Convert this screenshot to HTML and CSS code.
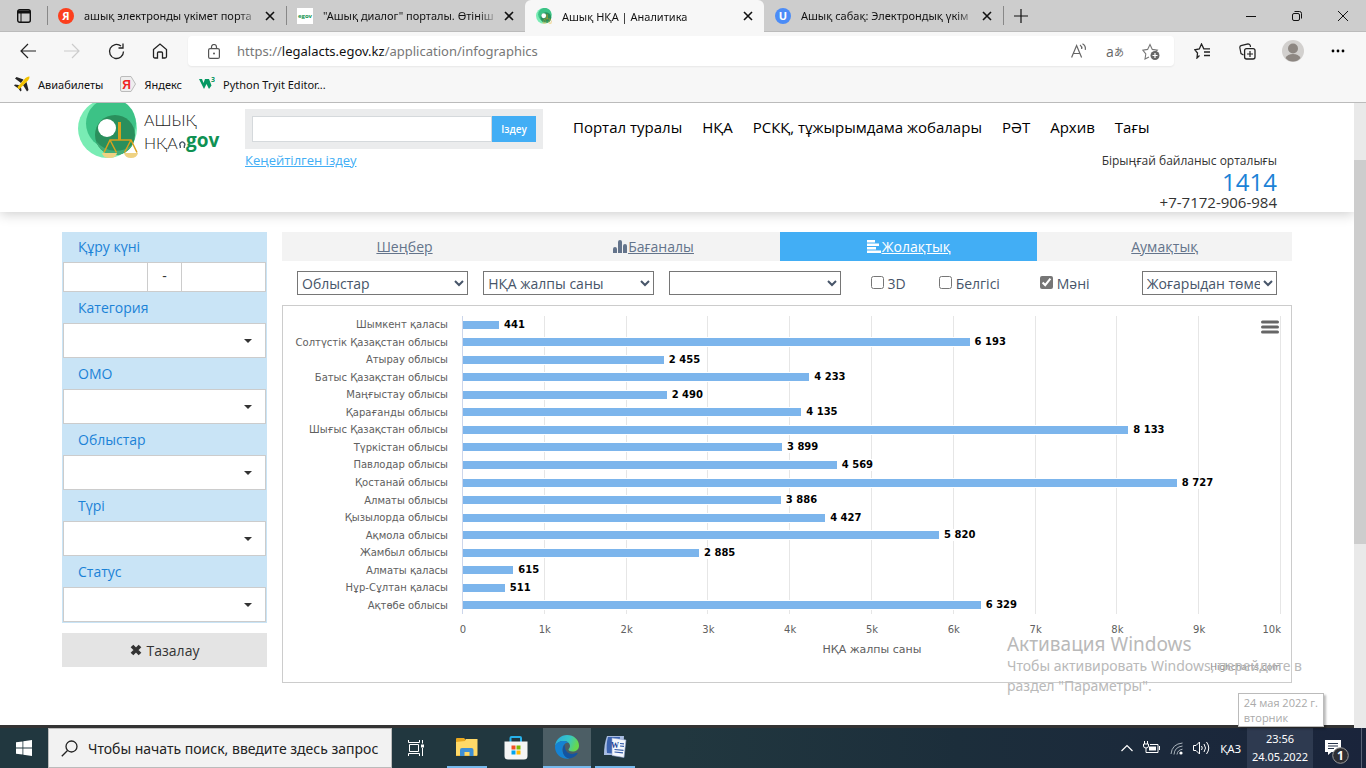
FILE: index.html
```html
<!DOCTYPE html>
<html lang="kk">
<head>
<meta charset="utf-8">
<title>Ашық НҚА | Аналитика</title>
<link rel="stylesheet" href="styles.css">
</head>
<body>
<svg class="defs" aria-hidden="true">
  <symbol id="x" viewBox="0 0 10 10"><path d="M1 1l8 8M9 1l-8 8" fill="none" stroke="currentColor" stroke-width="1.6"/></symbol>
  <symbol id="mark" viewBox="0 0 60 60">
    <circle cx="29.500" cy="29.500" r="29.500" fill="#79ecb4"/>
    <circle cx="33" cy="24.500" r="25" fill="#3cc286"/>
    <circle cx="37" cy="36" r="20" fill="#2a8f5c"/>
    <path d="M18 42a20 20 0 0 0 37 3a25 25 0 0 1-37-3z" fill="#41ac77"/>
    <circle cx="29" cy="29" r="9" fill="#fff"/>
    <path d="M40 23h3v18h-3z" fill="#d9a01d"/>
    <path d="M26 53.500l6-12.500h21l6 12.500M32 41l6.500 12.500M53 41l-6.500 12.500" fill="none" stroke="#d9a01d" stroke-width="1.500"/>
    <path d="M24 54h15q-1 5-7.500 5t-7.500-5zM46 54h14q-1 5-7 5t-7-5z" fill="#efd283"/>
  </symbol>
</svg>

<header class="browser">
  <div class="tabstrip">
    <button class="tab-actions" aria-label="Действия с вкладками"><svg width="14" height="14" viewBox="0 0 14 14"><rect x=".7" y=".7" width="12.600" height="12.600" rx="2" fill="none" stroke="#111" stroke-width="1.400"/><path d="M1 1.500h12v3H1z" fill="#111"/><path d="M4 4v9" stroke="#111"/></svg></button>
    <div class="tab"><svg width="16" height="16" viewBox="0 0 16 16"><circle cx="8" cy="8" r="8" fill="#fc3f1d"/><text x="8" y="12" text-anchor="middle" class="fav-letter">Я</text></svg><span class="tab-title">ашық электронды үкімет порта</span><button class="close" aria-label="Закрыть"><svg width="10" height="10"><use href="#x"/></svg></button></div>
    <div class="tab"><svg width="16" height="16" viewBox="0 0 16 16"><path d="M0 0h16v16H0z" fill="#fff"/><text x="8" y="10" text-anchor="middle" class="fav-egov">egov</text></svg><span class="tab-title">"Ашық диалог" порталы. Өтініш</span><button class="close" aria-label="Закрыть"><svg width="10" height="10"><use href="#x"/></svg></button></div>
    <div class="tab active"><svg width="16" height="16"><use href="#mark"/></svg><span class="tab-title">Ашық НҚА | Аналитика</span><button class="close" aria-label="Закрыть"><svg width="10" height="10"><use href="#x"/></svg></button></div>
    <div class="tab"><svg width="16" height="16" viewBox="0 0 16 16"><circle cx="8" cy="8" r="8" fill="#4b8cf7"/><text x="8" y="12" text-anchor="middle" class="fav-letter">U</text></svg><span class="tab-title">Ашық сабақ: Электрондық үкім</span><button class="close" aria-label="Закрыть"><svg width="10" height="10"><use href="#x"/></svg></button></div>
    <button class="new-tab" aria-label="Новая вкладка"><svg width="14" height="14" viewBox="0 0 14 14"><path d="M7 0v14M0 7h14" stroke="#111" stroke-width="1.200"/></svg></button>
    <div class="window-buttons">
      <button aria-label="Свернуть"><svg width="10" height="10"><path d="M0 5.500h10" stroke="#111"/></svg></button>
      <button aria-label="Восстановить"><svg width="10" height="10" viewBox="0 0 10 10"><rect x=".5" y="2.500" width="7" height="7" rx="1.500" fill="none" stroke="#111"/><path d="M2.500.5h5a2 2 0 0 1 2 2v5" fill="none" stroke="#111"/></svg></button>
      <button aria-label="Закрыть окно"><svg width="10" height="10" viewBox="0 0 10 10"><path d="M0 0l10 10M10 0L0 10" stroke="#111"/></svg></button>
    </div>
  </div>

  <div class="toolbar">
    <button aria-label="Назад"><svg width="16" height="16" viewBox="0 0 16 16"><path d="M16 8H1M8 1L1 8l7 7" fill="none" stroke="#222" stroke-width="1.200"/></svg></button>
    <button aria-label="Вперёд"><svg width="16" height="16" viewBox="0 0 16 16"><path d="M0 8h15M8 1l7 7-7 7" fill="none" stroke="#ccc" stroke-width="1.200"/></svg></button>
    <button aria-label="Обновить"><svg width="17" height="17" viewBox="0 0 17 17"><path d="M15.500 8.500A7 7 0 1 1 13 3.100M15 .5v4.500h-4.500" fill="none" stroke="#222" stroke-width="1.300"/></svg></button>
    <button aria-label="Домой"><svg width="16" height="16" viewBox="0 0 16 16"><path d="M1.500 6.500L8 1l6.500 5.500v7q0 1.500-1.500 1.500h-2.500v-5q0-1-1-1h-3q-1 0-1 1v5H3q-1.500 0-1.500-1.500z" fill="none" stroke="#222" stroke-width="1.300"/></svg></button>
    <div class="address">
      <svg width="12" height="15" viewBox="0 0 12 15"><rect x=".6" y="4.600" width="10.800" height="9.800" rx="1.500" fill="none" stroke="#555" stroke-width="1.200"/><path d="M3.500 4.500V3a2.500 2.500 0 0 1 5 0v1.500" fill="none" stroke="#555" stroke-width="1.200"/><circle cx="6" cy="9.500" r="1" fill="#555"/></svg>
      <span class="url">https://<b>legalacts.egov.kz</b>/application/infographics</span>
      <button aria-label="Прочесть вслух"><svg width="16" height="16" viewBox="0 0 16 16"><path d="M.6 14.500L5.600 2.500l5 12M2.400 10.500h6.500M9 2q2.200 1.500 1.700 4M11.500.8q3.500 2 2.800 6" fill="none" stroke="#666" stroke-width="1.200"/></svg></button>
      <button class="translate" aria-label="Перевести">a<small>あ</small></button>
      <button aria-label="Добавить в избранное"><svg width="18" height="17" viewBox="0 0 18 17"><path d="M7 14l-4 2 .8-5L.8 7.200l4.800-.8L8 1.500l2.300 4.900 5 .8-2 2" fill="none" stroke="#777" stroke-width="1.100"/><circle cx="13" cy="12.500" r="4.500" fill="#666"/><path d="M13 10v5M10.500 12.500h5" stroke="#fff" stroke-width="1.200"/></svg></button>
    </div>
    <div class="tools">
      <button aria-label="Избранное"><svg width="17" height="16" viewBox="0 0 17 16"><path d="M5.500 12.500L3 15l.5-5L.8 6.800l4.500-.9L7.500 1l2.300 4.900H16M10 9h6M10 12.500h6" fill="none" stroke="#222" stroke-width="1.300"/></svg></button>
      <button aria-label="Коллекции"><svg width="17" height="17" viewBox="0 0 17 17"><path d="M4.500 12L2 10.500.8 4.500q0-1.500 1.200-1.800L9 .8q1.500 0 2.200 1.500l.3 1.700" fill="none" stroke="#222" stroke-width="1.200"/><rect x="5.600" y="5.600" width="10.400" height="10.400" rx="2" fill="none" stroke="#222" stroke-width="1.300"/><path d="M11 8v6M8 11h6" stroke="#222" stroke-width="1.200"/></svg></button>
      <button aria-label="Профиль"><svg width="22" height="22" viewBox="0 0 22 22"><circle cx="11" cy="11" r="11" fill="#d2d0ce"/><circle cx="11" cy="8.500" r="5" fill="#8d8782"/><path d="M3.500 18q2-4 7.500-4t7.500 4q-3 3.500-7.500 3.500T3.500 18z" fill="#8d8782"/></svg></button>
      <button aria-label="Меню браузера"><svg width="14" height="4" viewBox="0 0 14 4"><circle cx="2" cy="2" r="1.400"/><circle cx="7" cy="2" r="1.400"/><circle cx="12" cy="2" r="1.400"/></svg></button>
    </div>
  </div>

  <nav class="bookmarks">
    <a href="#"><svg width="16" height="16" viewBox="0 0 16 16"><path d="M1 2.500l1.500-1.500 7 2.500L7 7zM9 9l3.500-3 2 8-1.500 1.500zM0 9.500l1-1 3.500.5L7 11.500l.5 3-1 1-2-3z" fill="#262626"/><path d="M3.500 11L11.500 2Q14 0 15.500.5q.5 1.500-1.500 4L5.500 13q-1.500.5-2-2z" fill="#f2c200"/></svg>Авиабилеты</a>
    <a href="#"><svg width="16" height="16" viewBox="0 0 16 16"><path d="M2 .5h9L15.500 8 11 15.500H2q-1.500 0-1.500-1.500V2Q.5.5 2 .5z" fill="#eee" stroke="#bbb"/><text x="6.500" y="12.500" text-anchor="middle" class="fav-ya">Я</text></svg>Яндекс</a>
    <a href="#"><svg width="16" height="16" viewBox="0 0 16 16"><path d="M0 3h3l1.500 4L6 3h4l2.500 6.500-2.500 3.500L7.500 8 5 13z" fill="#059862"/><text x="14" y="6" text-anchor="middle" class="fav-three">3</text></svg>Python Tryit Editor...</a>
  </nav>
</header>

<div class="viewport">
  <div class="page">
    <header class="site-header">
      <div class="container header-grid">
        <a class="logo" href="#" aria-label="Ашық НҚА egov"><svg width="144" height="60" viewBox="0 0 144 60"><use href="#mark" width="60" height="60"/><text x="66" y="27" class="logo-thin">АШЫҚ</text><text x="66" y="50" class="logo-thin">НҚА</text><path d="M102.300 49v-2a2.500 2.500 0 1 1 4 0v2" fill="none" stroke="#456" stroke-width="1.300"/><text x="108" y="48" class="logo-bold">gov</text></svg></a>
        <div class="search">
          <form class="search-box"><input type="text" aria-label="Іздеу"><button type="button">Іздеу</button></form>
          <a href="#">Кеңейтілген іздеу</a>
        </div>
        <div class="header-right">
          <nav class="main-nav"><a href="#">Портал туралы</a><a href="#">НҚА</a><a href="#">РСКҚ, тұжырымдама жобалары</a><a href="#">РӘТ</a><a href="#">Архив</a><a href="#">Тағы</a></nav>
          <address class="contact"><span>Бірыңғай байланыс орталығы</span><strong>1414</strong><span class="phone">+7-7172-906-984</span></address>
        </div>
      </div>
    </header>

    <div class="container body-grid">
      <aside>
        <form class="filters">
          <div class="filter"><label for="from">Құру күні</label><div class="range"><input id="from" type="text"><span>-</span><input type="text" aria-label="Құру күні, соңы"></div></div>
          <div class="filter"><label for="cat">Категория</label><div class="drop"><select id="cat"></select></div></div>
          <div class="filter"><label for="omo">ОМО</label><div class="drop"><select id="omo"></select></div></div>
          <div class="filter"><label for="reg">Облыстар</label><div class="drop"><select id="reg"></select></div></div>
          <div class="filter"><label for="type">Түрі</label><div class="drop"><select id="type"></select></div></div>
          <div class="filter"><label for="status">Статус</label><div class="drop"><select id="status"></select></div></div>
        </form>
        <button class="clear"><svg width="12" height="12" viewBox="0 0 12 12"><path d="M2 2l8 8M10 2l-8 8" stroke="#333" stroke-width="3.800"/></svg>Тазалау</button>
      </aside>

      <main>
        <nav class="chart-tabs">
          <a href="#">Шеңбер</a>
          <a href="#"><svg width="14" height="13" viewBox="0 0 14 13"><path d="M0 9q0-2 2-2t2 2v4H0zM5 2q0-2 2-2t2 2v11H5zM10 6q0-2 2-2t2 2v7h-4z" fill="currentColor"/></svg><u>Бағаналы</u></a>
          <a href="#" class="current"><svg width="14" height="13" viewBox="0 0 14 13"><path d="M0 0h8v2.500H0zM0 3.500h12V6H0zM0 7h9v2.500H0zM0 10.500h14V13H0z" fill="currentColor"/></svg><u>Жолақтық</u></a>
          <a href="#">Аумақтық</a>
        </nav>
        <div class="controls">
          <select aria-label="Топтау"><option>Облыстар</option></select>
          <select aria-label="Көрсеткіш"><option>НҚА жалпы саны</option></select>
          <select aria-label="Қосымша"></select>
          <div class="checks">
            <label><input type="checkbox">3D</label>
            <label><input type="checkbox">Белгісі</label>
            <label><input type="checkbox" checked>Мәні</label>
          </div>
          <select aria-label="Сұрыптау"><option>Жоғарыдан төменге</option></select>
        </div>
        <section class="chart">
          <button class="chart-menu" aria-label="Chart menu"><svg width="18" height="14" viewBox="0 0 18 14"><path d="M1.500 2h15M1.500 7h15M1.500 12h15" stroke="#666" stroke-width="3" stroke-linecap="round"/></svg></button>
          <div class="plot">
            <div class="gridlines"><i></i><i></i><i></i><i></i><i></i><i></i><i></i><i></i><i></i><i></i></div>
            <div class="rows">
              <div class="row"><span>Шымкент қаласы</span><div><i style="width:4.41%"></i><b>441</b></div></div>
              <div class="row"><span>Солтүстік Қазақстан облысы</span><div><i style="width:61.93%"></i><b>6 193</b></div></div>
              <div class="row"><span>Атырау облысы</span><div><i style="width:24.55%"></i><b>2 455</b></div></div>
              <div class="row"><span>Батыс Қазақстан облысы</span><div><i style="width:42.33%"></i><b>4 233</b></div></div>
              <div class="row"><span>Маңғыстау облысы</span><div><i style="width:24.9%"></i><b>2 490</b></div></div>
              <div class="row"><span>Қарағанды облысы</span><div><i style="width:41.35%"></i><b>4 135</b></div></div>
              <div class="row"><span>Шығыс Қазақстан облысы</span><div><i style="width:81.33%"></i><b>8 133</b></div></div>
              <div class="row"><span>Түркістан облысы</span><div><i style="width:38.99%"></i><b>3 899</b></div></div>
              <div class="row"><span>Павлодар облысы</span><div><i style="width:45.69%"></i><b>4 569</b></div></div>
              <div class="row"><span>Қостанай облысы</span><div><i style="width:87.27%"></i><b>8 727</b></div></div>
              <div class="row"><span>Алматы облысы</span><div><i style="width:38.86%"></i><b>3 886</b></div></div>
              <div class="row"><span>Қызылорда облысы</span><div><i style="width:44.27%"></i><b>4 427</b></div></div>
              <div class="row"><span>Ақмола облысы</span><div><i style="width:58.2%"></i><b>5 820</b></div></div>
              <div class="row"><span>Жамбыл облысы</span><div><i style="width:28.85%"></i><b>2 885</b></div></div>
              <div class="row"><span>Алматы қаласы</span><div><i style="width:6.15%"></i><b>615</b></div></div>
              <div class="row"><span>Нұр-Сұлтан қаласы</span><div><i style="width:5.11%"></i><b>511</b></div></div>
              <div class="row"><span>Ақтөбе облысы</span><div><i style="width:63.29%"></i><b>6 329</b></div></div>
            </div>
          </div>
          <div class="axis"><span>0</span><span>1k</span><span>2k</span><span>3k</span><span>4k</span><span>5k</span><span>6k</span><span>7k</span><span>8k</span><div class="axis-end"><span>9k</span><span class="last">10k</span></div></div>
          <div class="axis-title">НҚА жалпы саны</div>
          <a class="credits" href="#">Highcharts.com</a>
        </section>
      </main>
    </div>
  </div>
  <div class="scrollbar"><i></i></div>
</div>

<div class="activation"><strong>Активация Windows</strong><span>Чтобы активировать Windows, перейдите в раздел "Параметры".</span></div>
<div class="date-tip">24 мая 2022 г.<br>вторник</div>

<footer class="taskbar">
  <button class="start" aria-label="Пуск"><svg width="16" height="16" viewBox="0 0 16 16"><path d="M0 2.300l6.500-.9v6.200H0zM7.300 1.200L16 0v7.600H7.300zM0 8.400h6.500v6.200L0 13.700zM7.300 8.400H16V16l-8.700-1.200z" fill="#fff"/></svg></button>
  <label class="task-search"><svg width="17" height="17" viewBox="0 0 17 17"><circle cx="10.500" cy="6.500" r="5.500" fill="none" stroke="#222" stroke-width="1.300"/><path d="M6.500 10.500L.8 16.200" stroke="#222" stroke-width="1.300"/></svg><input type="text" placeholder="Чтобы начать поиск, введите здесь запрос" aria-label="Поиск"></label>
  <button class="task-view" aria-label="Представление задач"><svg width="17" height="16" viewBox="0 0 17 16"><path d="M.5 0v2.500h11V0M.5 16v-2.500h11V16M1.500 4.500h9v7h-9zM14.500 0v3.500M14.500 8v8" fill="none" stroke="#fff"/><path d="M13 4.500h3v3h-3z" fill="#fff"/></svg></button>
  <button class="app open explorer" aria-label="Проводник"><svg width="22" height="19" viewBox="0 0 22 19"><path d="M0 1q0-1 1-1h7l2 2h11v16H0z" fill="#e9a820"/><path d="M0 4l9-1 1-2h11.500v16.500H0z" fill="#ffd968"/><path d="M4 18v-6q0-2 2-2h9.500q2 0 2 2v6h-4v-4h-5v4z" fill="#3f8fd4"/></svg></button>
  <button class="app store" aria-label="Microsoft Store"><svg width="24" height="24" viewBox="0 0 24 24"><path d="M6.500 8V2q0-1 1-1h8.500q1 0 1 1v6" fill="none" stroke="#27b1ea" stroke-width="2"/><path d="M.5 5.500h23V20q0 3.500-3.500 3.500H4Q.5 23.500.5 20z" fill="#f5f5f5"/><path d="M7.500 9.500h4v4h-4z" fill="#f25022"/><path d="M12.500 9.500h4v4h-4z" fill="#7fba00"/><path d="M7.500 14.500h4v4h-4z" fill="#00a4ef"/><path d="M12.500 14.500h4v4h-4z" fill="#ffb900"/></svg></button>
  <button class="app open edge" aria-label="Microsoft Edge"><svg width="24" height="24" viewBox="0 0 24 24"><defs><linearGradient id="eg" x1="0" x2="1" y1="0" y2=".3"><stop offset="0" stop-color="#2aa9e0"/><stop offset=".6" stop-color="#36c6c6"/><stop offset="1" stop-color="#66d84e"/></linearGradient></defs><path d="M0 11C1 4 6 0 12 0c7 0 12 5 12 10.500 0 4-3 6-6.500 6-2.500 0-4-1-4-2 0-.8 1.500-1.500 1.500-3.500C15 8 12 6 8.500 6 4.500 6 1.500 8 0 11z" fill="url(#eg)"/><path d="M0 12C0 8.500 4 6 8.500 6c2 0 3.500.5 4.700 1.500C10 7.500 7.500 11 7.500 14.500c0 4.500 3 8 7 9C6.500 25 0 19 0 12z" fill="#1583d3"/><path d="M10 9.500c-3.500 2.500-3.500 13 4.500 14 4-.5 7-3 8.200-5.200.2-.6-.3-.8-.8-.5C15 21 9 17 10 9.500z" fill="#1454a0"/></svg></button>
  <button class="app open word" aria-label="Word"><svg width="24" height="24" viewBox="0 0 24 24"><path d="M4 1h17l-1 19H1Q1 9 4 1z" fill="#a9bde2"/><path d="M5 2h12l-2 17-11-1Q3 9 5 2z" fill="#3b63b0"/><path d="M9 3l14 2-2 17.500-12-2z" fill="#f5f8fd" stroke="#8fa3cc" stroke-width=".6"/><path d="M17 8.500l4 .3M17 11l4 .3M11.500 14.500l9 .8M11.500 17l8.500.8" stroke="#345ba8" stroke-width="1.200"/><text x="12" y="13" text-anchor="middle" class="word-letter">W</text></svg></button>
  <div class="tray">
    <svg width="12" height="8" viewBox="0 0 12 8"><path d="M.5 7L6 1.500 11.500 7" fill="none" stroke="#fff" stroke-width="1.200"/></svg>
    <svg width="17" height="14" viewBox="0 0 17 14"><path d="M1.500 0v3M4.500 0v3M.5 3h5v2q0 2-2.500 2T.5 5zM3 7v4.500h12v-8H7" fill="none" stroke="#fff"/><path d="M6 5.500h7v4H6zM16 5h1v4h-1z" fill="#fff"/></svg>
    <svg width="13" height="13" viewBox="0 0 13 13"><path d="M1 12Q2 2 12.500 1M4 12.500Q4.500 5 12.500 4M7 12.500Q7.500 8 12.500 7.200" fill="none" stroke="#aab4bc"/><circle cx="11" cy="11" r="1.600" fill="#fff"/></svg>
    <svg width="17" height="14" viewBox="0 0 17 14"><path d="M.5 4.500H3L6.500 1v12L3 9.500H.5zM8.500 5q1.500 2 0 4M11 3q3 4 0 8M13.500 1q4.500 6 0 12" fill="none" stroke="#fff"/></svg>
    <span>ҚАЗ</span>
    <time class="clock">23:56<br>24.05.2022</time>
    <button class="notify" aria-label="Уведомления: 1"><svg width="24" height="24" viewBox="0 0 24 24"><path d="M0 0h16v12H6.500L3 15v-3H0z" fill="#fff"/><path d="M3 3.500h10M3 6h10M3 8.500h6" stroke="#26334a"/><circle cx="15.500" cy="15.500" r="7.800" fill="#2e2e33" stroke="#999"/><text x="15.500" y="20" text-anchor="middle" class="badge-text">1</text></svg></button>
  </div>
</footer>
</body>
</html>
```
FILE: styles.css
```css
* { box-sizing: border-box; }

body {
  margin: 0;
  height: 100vh;
  display: flex;
  flex-direction: column;
  overflow: hidden;
  position: relative;
  font-family: "Open Sans", "Noto Sans", sans-serif;
  font-size: 14px;
  color: #333;
  background: #fff;
}

button {
  border: 0;
  padding: 0;
  background: none;
  font: inherit;
  color: inherit;
  display: flex;
  align-items: center;
  justify-content: center;
}

input, select { font: inherit; color: inherit; min-width: 0; }
svg { flex: none; display: block; }
.defs { position: absolute; width: 0; height: 0; }

/* Browser frame */
.browser {
  background: #f7f7f7;
  border-bottom: 1px solid #bbb;
  font-family: "Noto Sans", sans-serif;
  font-size: 11px;
  color: #111;
}

.tabstrip {
  display: flex;
  height: 32px;
  background: #cdcdcd;
  border-bottom: 1px solid #bbb;
}

.tab-actions { width: 47px; }

.tab {
  display: flex;
  align-items: center;
  flex: 0 1 239px;
  min-width: 0;
  padding: 0 8px 0 11px;
  position: relative;
}

.tab::before {
  content: "";
  position: absolute;
  left: 0;
  top: 6px;
  bottom: 6px;
  width: 1px;
  background: #888;
}

.tab.active {
  background: #f7f7f7;
  border-radius: 6px 6px 0 0;
  height: 32px;
}
.tab.active::before, .tab.active + .tab::before { display: none; }

.tab-title {
  flex: 1;
  margin: 0 2px 0 10px;
  overflow: hidden;
  white-space: nowrap;
  mask-image: linear-gradient(to right, #000 88%, transparent);
}

.close { width: 16px; height: 16px; }

.new-tab {
  width: 35px;
  position: relative;
}
.new-tab::before {
  content: "";
  position: absolute;
  left: 0;
  top: 6px;
  bottom: 6px;
  width: 1px;
  background: #888;
}

.window-buttons { display: flex; margin-left: auto; }
.window-buttons button { width: 46px; }

.toolbar {
  display: flex;
  align-items: center;
  height: 38px;
  padding: 0 6px;
}
.toolbar > button { width: 44px; height: 30px; }

.address {
  flex: 1;
  display: flex;
  align-items: center;
  height: 30px;
  margin-left: 6px;
  padding: 0 5px 0 20px;
  border-radius: 4px;
  background: #fff;
  box-shadow: 0 1px 2px #0001;
}
.address button { width: 36px; height: 30px; }

.url {
  flex: 1;
  margin-left: 17px;
  font-size: 13px;
  color: #777;
}
.url b { font-weight: 400; color: #111; }

.translate {
  font-family: "Open Sans", "Noto Sans CJK JP", sans-serif;
  font-size: 14px;
  color: #666;
}
.translate small { font-size: 10px; }

.tools { display: flex; margin-left: 6px; }
.tools button { width: 45px; height: 30px; }

.bookmarks {
  display: flex;
  align-items: center;
  gap: 17px;
  height: 32px;
  padding: 0 14px 4px;
}
.bookmarks a {
  display: flex;
  align-items: center;
  gap: 8px;
  color: #111;
  text-decoration: none;
}

.fav-letter { font: bold 11px "Open Sans", sans-serif; fill: #fff; }
.fav-egov { font: bold 6px "Open Sans", sans-serif; fill: #13934f; }
.fav-ya { font: bold 12px "Liberation Sans", sans-serif; fill: #e22; }
.fav-three { font: bold 7px "Open Sans", sans-serif; fill: #059862; }

/* Page area with its scrollbar */
.viewport { flex: 1; min-height: 0; display: flex; }

.page {
  flex: 1;
  min-width: 0;
  overflow: hidden;
  border-bottom: 3px solid #333;
}

.scrollbar {
  width: 12px;
  display: grid;
  grid-template-rows: 57fr 384fr 184fr;
  background: #e9e9e9;
}
.scrollbar i { grid-row: 2; background: #cdcdcd; }

.container { max-width: 1230px; margin: 0 auto; }

.site-header { box-shadow: 0 2px 12px #0003; }

.header-grid {
  display: grid;
  grid-template-columns: 183px 298px 1fr;
  height: 109px;
}

.logo { margin: -4px 0 0 16px; }
.logo-thin { font: 300 16px Lato, "Open Sans", sans-serif; fill: #222; }
.logo-bold { font: bold 19px "Open Sans", sans-serif; fill: #0f9153; }

.search { padding-top: 6px; font-size: 13px; }
.search > a { display: block; margin-top: 2px; color: #42aef5; }

.search-box {
  display: flex;
  height: 40px;
  padding: 7px;
  background: #ebeced;
}
.search-box input {
  flex: 1;
  border: 1px solid #d5d9dc;
  background: #fff;
}
.search-box button {
  width: 44px;
  background: #42aef5;
  color: #fff;
  font-size: 10px;
  font-weight: 600;
}

.header-right { padding: 13px 15px 0 30px; }

.main-nav { display: flex; gap: 20px; font-size: 15px; line-height: 22px; white-space: nowrap; }
.main-nav a { color: #000; text-decoration: none; }

.contact {
  display: flex;
  flex-direction: column;
  align-items: flex-end;
  margin-top: 14px;
  font-size: 12px;
  line-height: 18px;
  font-style: normal;
}
.contact strong { font-size: 24px; line-height: 24px; font-weight: 400; color: #1b82d6; }
.contact .phone { font-size: 15px; line-height: 16px; }

.body-grid {
  display: grid;
  grid-template-columns: 205px 1fr;
  gap: 15px;
  padding-top: 20px;
}

/* Filters */
.filters { padding: 0 1px 1px; background: #c9e4f6; }

.filter label {
  display: block;
  padding-left: 15px;
  line-height: 31px;
  color: #1b82d6;
}
.filter:first-child label { line-height: 30px; }

.range { display: flex; height: 30px; }
.range input, .range span {
  border: 1px solid #ccc;
  background: #fff;
}
.range input { flex: 1; }
.range span { width: 35px; margin: 0 -1px; text-align: center; line-height: 26px; }

.drop { position: relative; }
.drop::after {
  content: "";
  position: absolute;
  right: 14px;
  top: 16px;
  border: 4px solid transparent;
  border-top-color: #333;
  border-bottom: 0;
  pointer-events: none;
}
.drop select {
  display: block;
  width: 100%;
  height: 35px;
  border: 1px solid #ccc;
  border-radius: 0;
  appearance: none;
  background: #fff;
}

.clear {
  width: 100%;
  height: 34px;
  margin-top: 10px;
  gap: 5px;
  background: #e4e4e4;
}

/* Chart tabs and options */
.chart-tabs {
  display: grid;
  grid-template-columns: 245fr 253fr 257fr 255fr;
  background: #f3f3f3;
}
.chart-tabs a {
  display: flex;
  align-items: center;
  justify-content: center;
  gap: 1px;
  height: 29px;
  color: #64748b;
}
.chart-tabs .current { background: #42aef5; color: #fff; }

.controls {
  display: grid;
  grid-template-columns: 171fr 171fr 171fr 271fr 135fr;
  gap: 15px;
  align-items: center;
  padding: 10px 15px;
  color: #475569;
}
.controls select {
  height: 24px;
  width: 100%;
  border: 1px solid #767676;
  border-radius: 0;
  background-color: #fff;
}

.checks {
  display: grid;
  grid-template-columns: 68fr 101fr 87fr;
  padding-left: 15px;
}
.checks label { display: flex; align-items: center; gap: 4px; }
.checks input { width: 13px; height: 13px; margin: 0 0 2px; accent-color: #767676; }

/* Bar chart */
.chart {
  position: relative;
  padding: 10px 10px 9px 0;
  border: 1px solid #ccc;
  font-family: "DejaVu Sans", sans-serif;
  font-size: 10px;
  color: #606060;
}

.plot { display: grid; }
.gridlines, .rows { grid-area: 1 / 1; }

.gridlines {
  display: grid;
  grid-template-columns: repeat(10, 1fr);
  margin-left: 179px;
  border-left: 1px solid #ccd6eb;
}
.gridlines i { border-right: 1px solid #e6e6e6; }

.rows { display: grid; grid-template-rows: repeat(17, 1fr); height: 298px; }
.row { display: grid; grid-template-columns: 165px 1fr; gap: 15px; align-items: center; }
.row > span { text-align: right; white-space: nowrap; }
.row > div { display: flex; align-items: center; }
.row i {
  flex: none;
  height: 10px;
  border: solid #fff;
  border-width: 1px 0;
  background: #7cb5ec;
}
.row b { margin-left: 3px; padding: 0 2px; color: #000; background: #fff; font-size: 10px; line-height: 12px; }

.axis {
  display: grid;
  grid-template-columns: repeat(10, 1fr);
  margin: 9px 0 0 180px;
  line-height: 14px;
}
.axis span { justify-self: start; transform: translateX(-50%); }
.axis-end { display: flex; justify-content: space-between; }
.axis .last { transform: none; }

.axis-title { margin: 6px 0 0 180px; text-align: center; font-size: 11px; line-height: 14px; }

.credits {
  display: block;
  margin-top: 4px;
  text-align: right;
  font-size: 9px;
  line-height: 12px;
  color: #888;
  text-decoration: none;
}

.chart-menu { position: absolute; right: 12px; top: 14px; }

/* System overlays */
.activation {
  position: absolute;
  right: 44px;
  bottom: 72px;
  width: 315px;
  display: flex;
  flex-direction: column;
  font-family: "Noto Sans", sans-serif;
  font-size: 14px;
  line-height: 20px;
  color: #b9b9b9;
}
.activation strong { font-size: 19px; font-weight: 400; line-height: 24px; }

.date-tip {
  position: absolute;
  right: 42px;
  bottom: 41px;
  z-index: 1;
  padding: 1px 5px;
  border: 1px solid #bbb;
  background: #fff;
  box-shadow: 2px 2px 2px #0004;
  font-size: 11px;
  line-height: 15px;
  color: #aaa;
}

/* Taskbar */
.taskbar {
  display: flex;
  height: 40px;
  background: linear-gradient(to right, #21373f 50%, #1c2e3b 70%, #1a243b);
  font-family: "Noto Sans", sans-serif;
  font-size: 11px;
  color: #fff;
}
.start { width: 48px; }

.task-search {
  width: 344px;
  display: flex;
  align-items: center;
  gap: 10px;
  padding: 0 4px 0 12px;
  border: 1px solid #bbb;
  background: #f2f2f2;
}
.task-search input {
  flex: 1;
  padding: 0;
  border: 0;
  background: none;
  font-size: 14px;
}
.task-search input::placeholder { color: #222; opacity: 1; }

.task-view { width: 48px; }
.app { width: 40px; }
.open { border-bottom: 2px solid #76b9ed; }
.explorer { margin-left: 7px; }
.store { margin: 0 7px 0 9px; }
.edge { width: 48px; background: #4c5e65; }
.word { margin-left: 4px; }
.word-letter { font: bold 8px "Liberation Serif", serif; fill: #24489a; }

.tray {
  display: flex;
  align-items: center;
  gap: 10px;
  margin-left: auto;
}
.clock {
  align-self: stretch;
  width: 66px;
  padding-top: 2px;
  margin-left: -4px;
  background: #2e3a50;
  text-align: center;
  line-height: 18px;
}
.notify { margin-right: 4px; padding: 8px 12px 0 2px; border-right: 1px solid #596275; height: 40px; }
.badge-text { font: bold 12px "Open Sans", sans-serif; fill: #fff; }
```
